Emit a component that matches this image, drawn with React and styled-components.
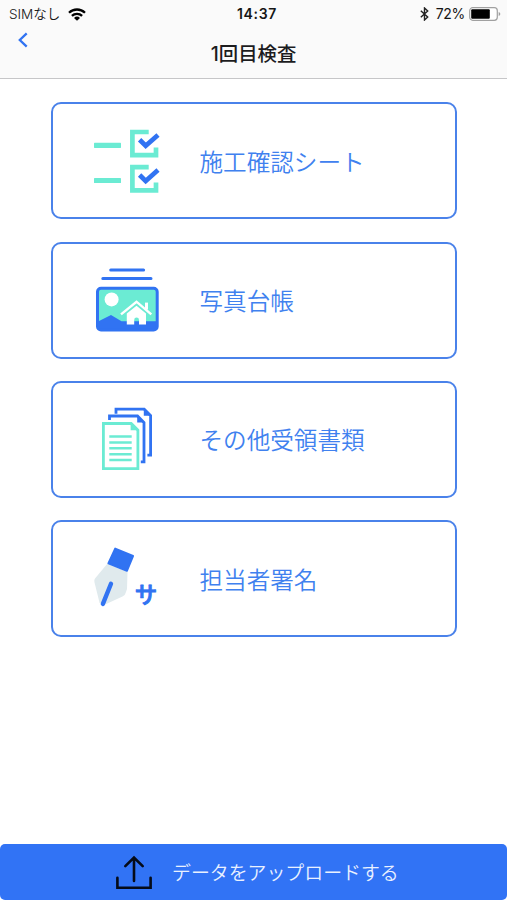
import React from "react";
import styled, { createGlobalStyle } from "styled-components";

const BLUE = "#3173f2";
const TEAL = "#6bebd3";

const GlobalStyle = createGlobalStyle`
  *, *::before, *::after { box-sizing: border-box; }
  body {
    margin: 0;
    background: #fff;
    font-family: "Inter", "Noto Sans CJK JP", sans-serif;
  }
`;

const Screen = styled.div`
  display: flex;
  flex-direction: column;
  width: 507px;
  height: 900px;
  overflow: hidden;
  background: #fff;
`;

const Header = styled.header`
  flex: none;
  height: 79px;
  background: #fafafa;
  border-bottom: 1px solid #c6c6c8;
`;

const StatusBar = styled.div`
  display: grid;
  grid-template-columns: 1fr auto 1fr;
  align-items: center;
  height: 28px;
  padding: 0 6px 0 9px;
  color: #161616;
  font-size: 14px;
  line-height: 28px;
  white-space: nowrap;
`;

const StatusGroup = styled.div`
  display: flex;
  align-items: center;
  justify-content: ${(p) => (p.$end ? "flex-end" : "flex-start")};
  height: 28px;
`;

const Carrier = styled.span`
  width: 52px;
  margin-right: 7px;
  font-family: "Inter", "Noto Sans CJK JP", sans-serif;
  font-size: 13.6px;
  letter-spacing: -0.05px;
  font-weight: 350;
`;

const Clock = styled.span`
  padding-left: 4px;
  font-weight: 600;
  font-size: 14px;
  letter-spacing: 0.65px;
`;

const Percent = styled.span`
  margin: 0 4px 0 7px;
  font-size: 14px;
  letter-spacing: -0.3px;
`;

const NavBar = styled.nav`
  display: grid;
  grid-template-columns: 60px 1fr 60px;
  height: 50px;
`;

const BackButton = styled.button`
  display: flex;
  align-items: flex-start;
  padding: 4px 0 0 17px;
  border: 0;
  background: none;
`;

const Title = styled.h1`
  margin: 0;
  color: #1c1c1e;
  font-family: "Inter", "Noto Sans CJK JP", sans-serif;
  font-size: 19.4px;
  font-weight: 500;
  line-height: 52px;
  text-align: center;
`;

const Menu = styled.main`
  flex: 1;
  display: flex;
  flex-direction: column;
  gap: 22.4px;
  padding: 23.2px 50px 0 51px;
`;

const Card = styled.button`
  display: flex;
  align-items: center;
  flex: none;
  height: 117px;
  padding: 0 0 0 34px;
  border: 2px solid #4a82ea;
  border-radius: 10px;
  background: #fff;
`;

const CardIcon = styled.svg`
  flex: none;
  width: 80px;
  height: 80px;
  margin-right: 32.5px;
  overflow: visible;
`;

const CardLabel = styled.span`
  color: #4081ef;
  font-family: "Noto Sans CJK JP", sans-serif;
  font-size: 23.6px;
  font-weight: 350;
  line-height: 36px;
  white-space: nowrap;
`;

const UploadButton = styled.button`
  display: flex;
  align-items: center;
  flex: none;
  height: 56px;
  padding: 0 0 0 115px;
  border: 0;
  border-radius: 5px;
  background: #3173f5;
`;

const UploadLabel = styled.span`
  margin-left: 19px;
  color: #e9f1ff;
  font-family: "Noto Sans CJK JP", sans-serif;
  font-size: 18.9px;
  font-weight: 350;
  line-height: 28px;
  white-space: nowrap;
`;

const WifiIcon = () => (
  <svg width="18" height="13" viewBox="0 0 18 13" fill="none" stroke="#000" strokeWidth="2.3">
    <path d="M1 4.8a11.4 11.4 0 0 1 16 0" />
    <path d="M3.9 7.9a7.2 7.2 0 0 1 10.2 0" />
    <path d="M9 12.8 6 9.9a4.3 4.3 0 0 1 6 0z" fill="#000" stroke="none" />
  </svg>
);

const BluetoothIcon = () => (
  <svg width="9" height="14" viewBox="0 0 9 14" fill="none" stroke="#222" strokeWidth="1.4">
    <path d="M.8 3.8 7.7 10 4.5 13V1l3.2 3L.8 10.2" />
  </svg>
);

const BatteryIcon = () => (
  <svg width="32" height="14" viewBox="0 0 32 14">
    <rect x=".7" y=".7" width="27.6" height="12.6" rx="3" fill="#fff" stroke="#a0a0a0" strokeWidth="1.2" />
    <rect x="2.2" y="2.2" width="18.6" height="9.6" rx="1" fill="#000" />
    <path d="M29.7 5v4q1.6-.5 1.6-2t-1.6-2z" fill="#a0a0a0" />
  </svg>
);

const ChecklistIcon = () => (
  <CardIcon viewBox="0 0 80 80" fill="none">
    {[0, 35.2].map((dy) => (
      <g key={dy} transform={`translate(0 ${dy})`}>
        <rect x="7" y="21.7" width="27" height="5.2" rx=".6" fill={TEAL} />
        <path d="M61.7 11H45.4V34.2H69V26.4" stroke={TEAL} strokeWidth="4.7" />
        <path d="M52.6 18.8l6.1 6L71 13.9" stroke={BLUE} strokeWidth="4.7" />
      </g>
    ))}
  </CardIcon>
);

const PhotoIcon = () => (
  <CardIcon viewBox="0 0 80 80" fill="none">
    <path d="M23.7 10.1H56.6M15.8 18.4H64" stroke={BLUE} strokeWidth="3" strokeLinecap="round" />
    <rect x="10.5" y="28.3" width="59.7" height="41.6" rx="3" fill={TEAL} />
    <path d="M11 61.4 24 55l10.5 6.2H70V70H11z" fill={BLUE} />
    <rect x="10.5" y="28.3" width="59.7" height="41.6" rx="3.5" stroke={BLUE} strokeWidth="3" />
    <circle cx="24.6" cy="39.4" r="7" fill="#fff" />
    <path d="M34 54.4 49.5 41.7 64.3 54.4" stroke="#fff" strokeWidth="2.4" />
    <path d="M59.5 42.6v7" stroke="#fff" strokeWidth="3" />
    <path d="M39.8 53.6 49.5 45.7 59 53.6V64.5H52V60a2.4 2.4 0 0 0-4.8 0v4.5H39.8z" fill="#fff" />
  </CardIcon>
);

const DocumentsIcon = () => (
  <CardIcon viewBox="0 0 80 80" fill="none">
    <g stroke={BLUE} strokeWidth="2.8">
      <path d="M29 14.7V10.2H57.2L63.6 16.6V56.1H60.4" />
      <path d="M22.5 20.9V17H50.5L57 23.6V62.8H53.8" />
    </g>
    <path d="M56.8 10.2V16.8H63.6zM50.2 17V23.6H57z" fill={BLUE} />
    <path d="M16.4 24.5H44.2L50.9 31.2V69.7H16.4z" stroke={TEAL} strokeWidth="2.8" />
    <path d="M43.6 24V31.2H51z" fill={TEAL} />
    <path
      d="M22.3 37.5H44.7M22.3 43.4H44.7M22.3 49.3H44.7M22.3 55.2H44.7M22.3 61.1H44.7"
      stroke={TEAL}
      strokeWidth="2.5"
    />
  </CardIcon>
);

const Signature = styled.text`
  font-family: "Noto Sans CJK JP", sans-serif;
  font-size: 22.5px;
  font-weight: 500;
  fill: ${BLUE};
  stroke: ${BLUE};
  stroke-width: 0.9px;
  stroke-linejoin: round;
`;

const SignatureIcon = () => (
  <CardIcon viewBox="0 0 80 80" fill="none">
    <path
      d="M20.3 24.7 8 39.6Q7 41 7.4 43L12.6 64 17 66 35.5 57.6Q38 56.6 38.6 54L40 50 40.5 33z"
      fill="#e0eaed"
    />
    <path
      d="M28.2 9.6 46 17 39.9 31.8 21.4 24.4z"
      fill={BLUE}
      stroke={BLUE}
      strokeWidth="2"
      strokeLinejoin="round"
    />
    <path d="M24 44.8 15.9 64.9" stroke={BLUE} strokeWidth="4.4" strokeLinecap="round" />
    <Signature x="47.8" y="64.2">サ</Signature>
  </CardIcon>
);

const UploadIcon = () => (
  <svg width="38" height="36" viewBox="0 0 38 36" fill="none" stroke="#050b18" strokeWidth="2.6" strokeLinecap="round">
    <path d="M19 27V3.5M10.3 12.2 19 3.5 27.7 12.2" />
    <path d="M2.4 23.8V33.7H35.6V23.8" />
  </svg>
);

const items = [
  { label: "施工確認シート", Icon: ChecklistIcon },
  { label: "写真台帳", Icon: PhotoIcon },
  { label: "その他受領書類", Icon: DocumentsIcon },
  { label: "担当者署名", Icon: SignatureIcon },
];

export default function App() {
  return (
    <>
      <GlobalStyle />
      <Screen>
        <Header>
          <StatusBar>
            <StatusGroup>
              <Carrier>SIMなし</Carrier>
              <WifiIcon />
            </StatusGroup>
            <Clock>14:37</Clock>
            <StatusGroup $end>
              <BluetoothIcon />
              <Percent>72%</Percent>
              <BatteryIcon />
            </StatusGroup>
          </StatusBar>
          <NavBar>
            <BackButton aria-label="戻る">
              <svg width="12" height="16" viewBox="0 0 12 16" fill="none" stroke={BLUE} strokeWidth="2.3">
                <path d="M9.7 1.4 2.8 8l6.9 6.6" />
              </svg>
            </BackButton>
            <Title>1回目検査</Title>
          </NavBar>
        </Header>
        <Menu>
          {items.map(({ label, Icon }) => (
            <Card key={label}>
              <Icon />
              <CardLabel>{label}</CardLabel>
            </Card>
          ))}
        </Menu>
        <UploadButton>
          <UploadIcon />
          <UploadLabel>データをアップロードする</UploadLabel>
        </UploadButton>
      </Screen>
    </>
  );
}
